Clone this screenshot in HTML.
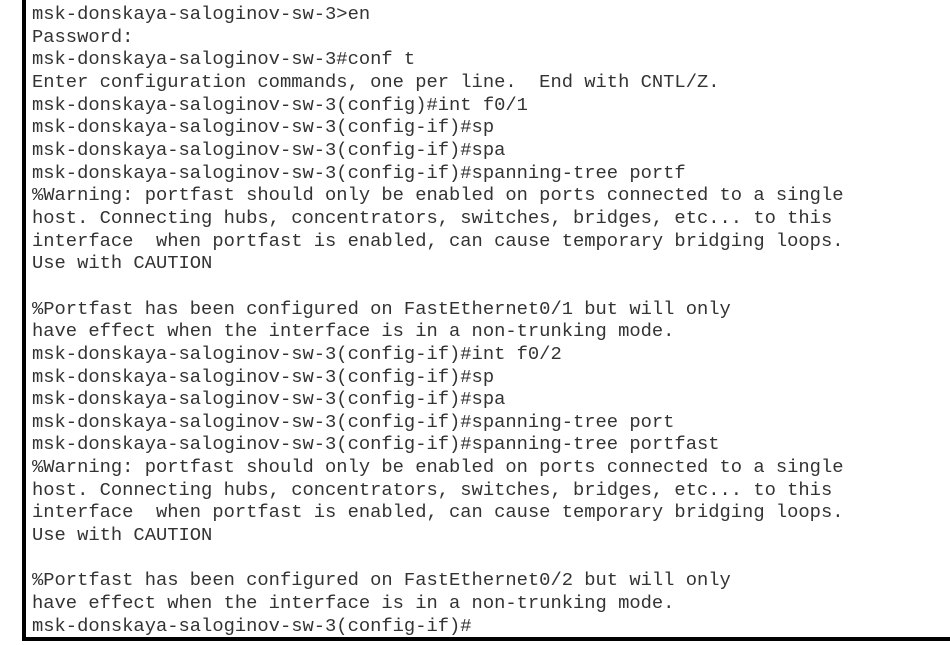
<!DOCTYPE html>
<html><head><meta charset="utf-8"><style>
html,body{margin:0;padding:0;background:#fff;width:950px;height:645px;overflow:hidden}
.box{position:absolute;left:22px;top:-4px;width:940px;height:645px;border-left:4px solid #000;border-bottom:4px solid #000;box-sizing:border-box}
pre{position:absolute;left:32px;top:3px;margin:0;font-family:"Liberation Mono",monospace;font-size:18.8px;line-height:22.65px;color:#333}
</style></head><body>
<div class="box"></div>
<pre>msk-donskaya-saloginov-sw-3&gt;en
Password:
msk-donskaya-saloginov-sw-3#conf t
Enter configuration commands, one per line.  End with CNTL/Z.
msk-donskaya-saloginov-sw-3(config)#int f0/1
msk-donskaya-saloginov-sw-3(config-if)#sp
msk-donskaya-saloginov-sw-3(config-if)#spa
msk-donskaya-saloginov-sw-3(config-if)#spanning-tree portf
%Warning: portfast should only be enabled on ports connected to a single
host. Connecting hubs, concentrators, switches, bridges, etc... to this
interface  when portfast is enabled, can cause temporary bridging loops.
Use with CAUTION

%Portfast has been configured on FastEthernet0/1 but will only
have effect when the interface is in a non-trunking mode.
msk-donskaya-saloginov-sw-3(config-if)#int f0/2
msk-donskaya-saloginov-sw-3(config-if)#sp
msk-donskaya-saloginov-sw-3(config-if)#spa
msk-donskaya-saloginov-sw-3(config-if)#spanning-tree port
msk-donskaya-saloginov-sw-3(config-if)#spanning-tree portfast
%Warning: portfast should only be enabled on ports connected to a single
host. Connecting hubs, concentrators, switches, bridges, etc... to this
interface  when portfast is enabled, can cause temporary bridging loops.
Use with CAUTION

%Portfast has been configured on FastEthernet0/2 but will only
have effect when the interface is in a non-trunking mode.
msk-donskaya-saloginov-sw-3(config-if)#</pre>
</body></html>
